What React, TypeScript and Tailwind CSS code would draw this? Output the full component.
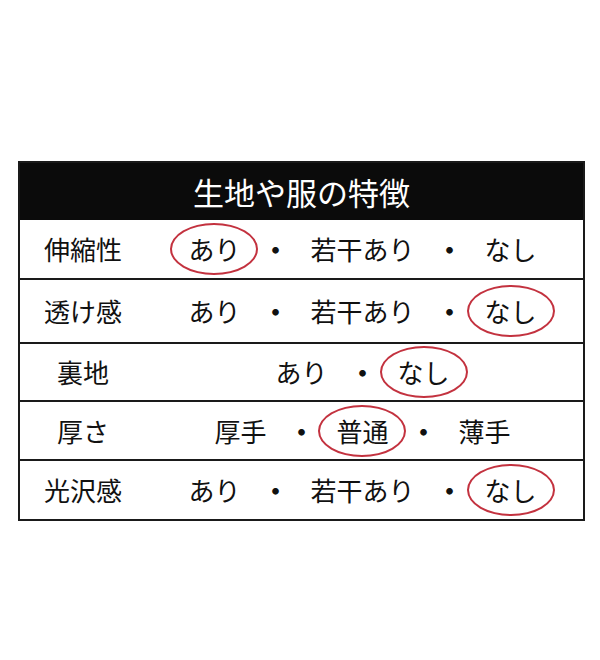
import React from "react"

// One row of the fabric chart: a label and the choices, with the picked one circled
interface Row {
  label: string
  options: string[]
  picked: number
}

const rows: Row[] = [
  { label: "伸縮性", options: ["あり", "若干あり", "なし"], picked: 0 },
  { label: "透け感", options: ["あり", "若干あり", "なし"], picked: 2 },
  { label: "裏地", options: ["あり", "なし"], picked: 1 },
  { label: "厚さ", options: ["厚手", "普通", "薄手"], picked: 1 },
  { label: "光沢感", options: ["あり", "若干あり", "なし"], picked: 2 },
]

const rowHeights = ["h-[58px]", "h-[64px]", "h-[58px]", "h-[59px]", "h-[60px]"]

function Option({ text, picked }: { text: string; picked: boolean }) {
  return (
    <span className="relative inline-flex items-center justify-center">
      {text}
      {picked && (
        <span className="absolute left-1/2 top-1/2 h-[52px] w-[88px] -translate-x-1/2 -translate-y-1/2 rounded-[50%] border-2 border-[#c3323f]" />
      )}
    </span>
  )
}

export default function App() {
  return (
    <div
      className="min-h-[660px] w-[600px] bg-white pt-[161px] pl-[18px] text-[#111111]"
      style={{ fontFamily: '"Noto Sans CJK JP", "Noto Sans", sans-serif' }}
    >
      <div className="w-[567px] border-2 border-[#1a1a1a]">
        {/* Header */}
        <div className="flex h-[57px] items-center justify-center bg-[#0b0b0b] text-[31px] leading-none text-white">
          生地や服の特徴
        </div>

        {/* Rows */}
        {rows.map((row, i) => (
          <div
            key={row.label}
            className={`flex items-center border-[#1a1a1a] text-[26px] leading-none ${rowHeights[i]} ${
              i > 0 ? "border-t-2" : ""
            }`}
          >
            <div className="flex w-[126px] justify-center">{row.label}</div>
            <div className="flex flex-1 items-center justify-center gap-[22px] pr-[4px]">
              {row.options.map((opt, j) => (
                <React.Fragment key={opt}>
                  {j > 0 && <span className="font-bold">・</span>}
                  <Option text={opt} picked={j === row.picked} />
                </React.Fragment>
              ))}
            </div>
          </div>
        ))}
      </div>
    </div>
  )
}
